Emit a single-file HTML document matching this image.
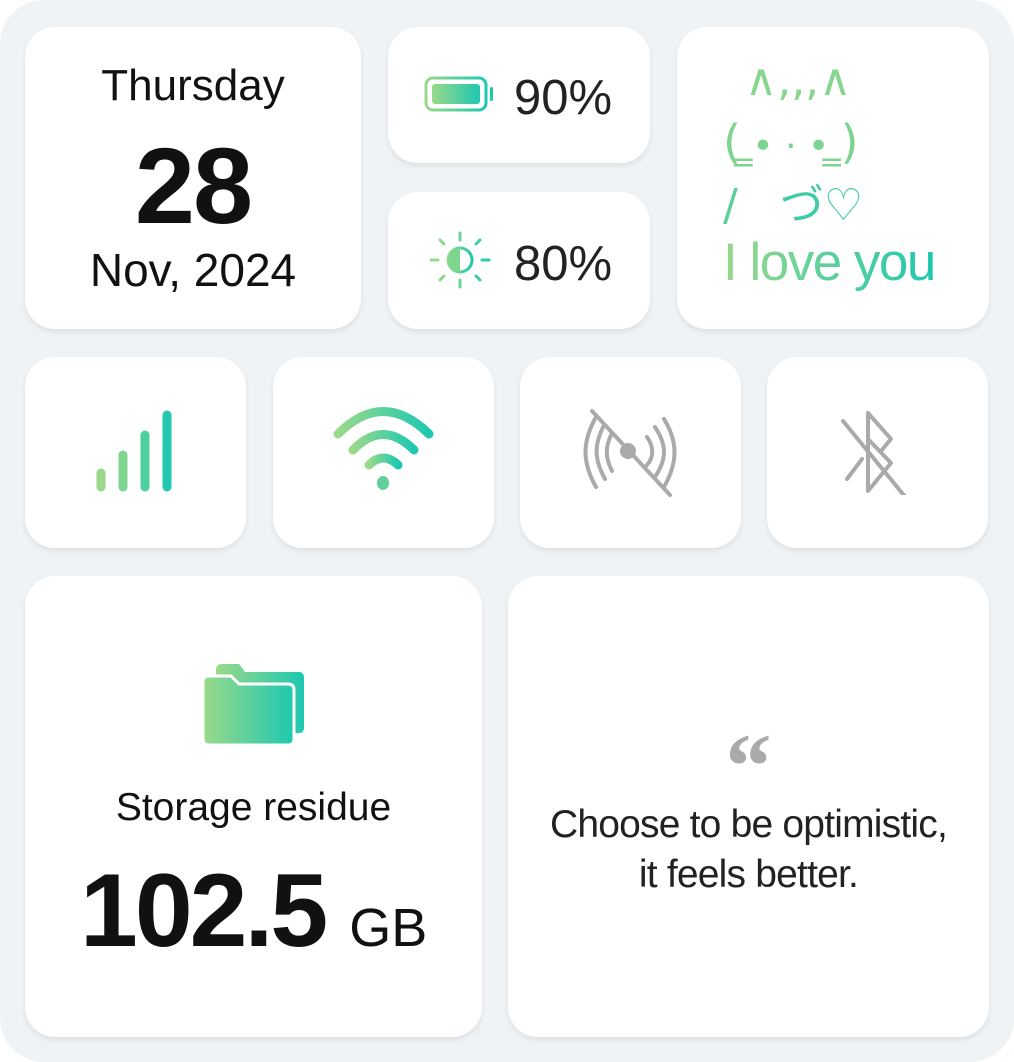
<!DOCTYPE html><html><head><meta charset="utf-8"><style>
*{margin:0;padding:0;box-sizing:border-box}
body{width:1014px;height:1062px;background:#fff;font-family:"Liberation Sans","Noto Sans CJK JP",sans-serif;position:relative;overflow:hidden}
.bg{position:absolute;left:0;top:0;width:1014px;height:1062px;background:#f0f3f6;border-radius:44px}
.c{position:absolute;background:#fff;border-radius:30px;box-shadow:0 3px 6px rgba(0,0,0,.08)}
.t{position:absolute;width:100%;text-align:center;color:#111}
.g{background:linear-gradient(90deg,#9ad98a,#1ec8b0);-webkit-background-clip:text;background-clip:text;color:transparent}
.cat{position:absolute;white-space:pre;font-family:"DejaVu Sans","Noto Sans CJK JP",sans-serif}
</style></head><body><div class="bg"></div>
<svg width="0" height="0" style="position:absolute"><defs><linearGradient id="gr" x1="0" x2="1" y1="0" y2="0"><stop offset="0" stop-color="#9ad98a"/><stop offset="1" stop-color="#1ec8b0"/></linearGradient></defs></svg>

<div class="c" style="left:25px;top:27px;width:336px;height:302px">
<div class="t" style="top:34px;font-size:44px">Thursday</div>
<div class="t" style="top:96px;font-size:108px;font-weight:bold;letter-spacing:-2px">28</div>
<div class="t" style="top:216px;font-size:46px">Nov, 2024</div>
</div>

<div class="c" style="left:388px;top:27px;width:262px;height:136px">
<svg style="position:absolute;left:36px;top:47px" width="72" height="40"><rect x="2" y="4" width="60" height="32" rx="7" fill="none" stroke="url(#gr)" stroke-width="3"/><rect x="8" y="10" width="48" height="20" rx="3" fill="url(#gr)"/><rect x="66" y="13" width="3" height="14" rx="1.5" fill="#1ec8b0"/></svg>
<div style="position:absolute;left:126px;top:43px;font-size:49px;color:#222">90%</div>
</div>

<div class="c" style="left:388px;top:192px;width:262px;height:137px">
<svg style="position:absolute;left:40px;top:38px" width="64" height="60" viewBox="0 0 64 60"><g stroke-width="3" stroke-linecap="round">
<line x1="32" y1="3" x2="32" y2="10" stroke="#6dd396"/><line x1="32" y1="50" x2="32" y2="57" stroke="#6dd396"/><line x1="3" y1="30" x2="10" y2="30" stroke="#9ad98a"/><line x1="54" y1="30" x2="61" y2="30" stroke="#2ccab0"/>
<line x1="12" y1="10" x2="16" y2="14" stroke="#8dd88c"/><line x1="48" y1="46" x2="52" y2="50" stroke="#3ccca8"/><line x1="12" y1="50" x2="16" y2="46" stroke="#8dd88c"/><line x1="48" y1="14" x2="52" y2="10" stroke="#3ccca8"/></g>
<circle cx="32" cy="30" r="12" fill="none" stroke="url(#gr)" stroke-width="3"/><path d="M32 18 A12 12 0 0 0 32 42Z" fill="#7dd58e"/></svg>
<div style="position:absolute;left:126px;top:44px;font-size:49px;color:#222">80%</div>
</div>

<div class="c" style="left:677px;top:27px;width:312px;height:302px">
<div class="cat" style="left:68px;top:28px;font-size:44px;color:#86d68d">∧,,,∧</div>
<div class="cat" style="left:46px;top:88px;font-size:46px;color:#7dd490">(<span style="font-size:36px"> ̳• · • ̳</span>)</div>
<div class="cat" style="left:46px;top:142px;font-size:44px;color:#5fcf9c">/   <span style="color:#3fcca8">づ♡</span></div>
<div class="g" style="position:absolute;left:46px;top:205px;font-size:53px;letter-spacing:-1.5px">I love you</div>
</div>

<div class="c" style="left:25px;top:357px;width:221px;height:191px">
<svg style="position:absolute;left:68px;top:50px" width="90" height="90">
<g stroke-linecap="round" stroke-width="9"><line x1="8" y1="66" x2="8" y2="80" stroke="#9ad98a"/><line x1="30" y1="48" x2="30" y2="80" stroke="#7dd48f"/><line x1="52" y1="28" x2="52" y2="80" stroke="#4ecfa0"/><line x1="74" y1="8" x2="74" y2="80" stroke="#22c9b0"/></g></svg>
</div>

<div class="c" style="left:273px;top:357px;width:221px;height:191px">
<svg style="position:absolute;left:60px;top:50px" width="104" height="84" viewBox="0 0 104 84"><g fill="none" stroke="url(#gr)" stroke-width="9" stroke-linecap="round">
<path d="M5 27 Q50 -18 96 27"/><path d="M20 43 Q50 12 81 43"/><path d="M36 58 Q50 44 65 58"/></g><ellipse cx="50" cy="76" rx="6" ry="7" fill="#62d09a"/></svg>
</div>

<div class="c" style="left:520px;top:357px;width:221px;height:191px">
<svg style="position:absolute;left:60px;top:50px" width="100" height="90" viewBox="0 0 100 90"><g fill="none" stroke="#aaa" stroke-width="4" stroke-linecap="round">
<path d="M16 10 C2 35 2 55 16 80"/><path d="M24 18 C14 38 14 52 25 72"/><path d="M32 26 C25 40 25 50 32 64"/>
<path d="M84 12 C98 35 98 55 84 80"/><path d="M75 20 C87 38 87 52 75 70"/><path d="M67 30 C74 40 74 50 67 58"/>
<line x1="12" y1="4" x2="90" y2="88"/></g><circle cx="48" cy="44" r="8" fill="#aaa"/></svg>
</div>

<div class="c" style="left:767px;top:357px;width:221px;height:191px">
<svg style="position:absolute;left:72px;top:52px" width="80" height="86" viewBox="0 0 80 86"><g fill="none" stroke="#aaa" stroke-width="4" stroke-linecap="round" stroke-linejoin="round">
<path d="M29 4 L29 82 L52 54 L29 30 M29 4 L52 30 L42 42"/><line x1="4" y1="12" x2="68" y2="90"/><line x1="8" y1="70" x2="23" y2="50"/></g></svg>
</div>

<div class="c" style="left:25px;top:576px;width:457px;height:461px">
<svg style="position:absolute;left:178px;top:88px" width="104" height="84" viewBox="0 0 104 84"><path d="M13 6 Q13 0 19 0 H36 L42 8 H96 Q101 8 101 14 V64 Q101 69 96 69 H13Z" fill="url(#gr)"/>
<path d="M0 18 Q0 12 6 12 H28 L36 20 H85 Q91 20 91 26 V75 Q91 81 85 81 H6 Q0 81 0 75Z" fill="url(#gr)" stroke="#fff" stroke-width="3"/></svg>
<div class="t" style="top:210px;font-size:39px">Storage residue</div>
<div style="position:absolute;left:55px;top:276px;font-size:104px;font-weight:bold;color:#111;letter-spacing:-3px;white-space:nowrap">102.5<span style="font-size:54px;font-weight:normal;letter-spacing:0;margin-left:24px">GB</span></div>
</div>

<div class="c" style="left:508px;top:576px;width:481px;height:461px">
<div class="t" style="top:140px;font-size:92px;color:#aaa;font-weight:bold;font-family:'Liberation Serif',serif;line-height:100px">“</div>
<div class="t" style="top:224px;font-size:39px;line-height:50px;color:#222;letter-spacing:-0.8px">Choose to be optimistic,<br>it feels better.</div>
</div>
</body></html>
